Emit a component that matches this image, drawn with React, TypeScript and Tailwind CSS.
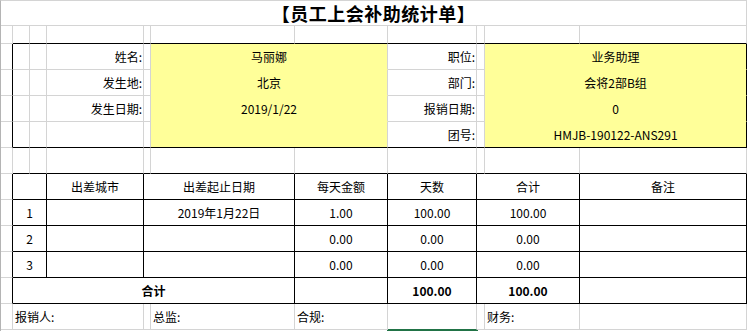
const R = {
  g: "border-r-[#d4d4d4]",
  k: "border-r-black",
  t: "border-r-transparent",
};

const B = {
  g: "border-b-[#d4d4d4]",
  k: "border-b-black",
  t: "border-b-transparent",
  gr: "border-b-[#217346]",
};

type CellProps = {
  w: string;
  r?: keyof typeof R;
  b?: keyof typeof B;
  bg?: string;
  align?: "left" | "center" | "right";
  bold?: boolean;
  children?: React.ReactNode;
};

function C({ w, r = "g", b = "g", bg = "bg-white", align = "center", bold, children }: CellProps) {
  const justify =
    align === "left" ? "justify-start pl-[2px]" : align === "right" ? "justify-end pr-[1px]" : "justify-center";
  return (
    <div
      className={`${w} ${R[r]} ${B[b]} ${bg} ${justify} ${bold ? "font-bold" : ""} flex h-full shrink-0 items-center whitespace-nowrap border-r border-b`}
    >
      {children}
    </div>
  );
}

function Row({ h, children }: { h: string; children: React.ReactNode }) {
  return <div className={`${h} flex`}>{children}</div>;
}

const info = [
  ["姓名:", "马丽娜", "职位:", "业务助理"],
  ["发生地:", "北京", "部门:", "会将2部B组"],
  ["发生日期:", "2019/1/22", "报销日期:", "0"],
  ["", "", "团号:", "HMJB-190122-ANS291"],
];

const items = [
  ["1", "", "2019年1月22日", "1.00", "100.00", "100.00", ""],
  ["2", "", "", "0.00", "0.00", "0.00", ""],
  ["3", "", "", "0.00", "0.00", "0.00", ""],
];

const Y = "bg-[#ffff99]";

export default function App() {
  return (
    <div className="w-[747px] border-t border-l border-t-[#d4d4d4] border-l-[#b4b4b4] bg-white font-['Noto_Sans_CJK_SC',sans-serif] text-[12px] leading-none text-black">
      <Row h="h-[25px]">
        <C w="w-[746px]">
          <span className="text-[18px] font-bold tracking-[0.5px]">【员工上会补助统计单】</span>
        </C>
      </Row>

      <Row h="h-[18px]">
        <C w="w-[12px]" />
        <C w="w-[17px]" b="k" />
        <C w="w-[17px]" b="k" />
        <C w="w-[97px]" b="k" />
        <C w="w-[7px]" b="k" />
        <C w="w-[144px]" b="k" />
        <C w="w-[93px]" b="k" />
        <C w="w-[89px]" b="k" />
        <C w="w-[8px]" b="k" />
        <C w="w-[95px]" b="k" />
        <C w="w-[167px]" b="k" />
      </Row>

      {info.map((row, i) => {
        const last = i === info.length - 1;
        return (
          <Row h="h-[26px]" key={i}>
            <C w="w-[12px]" r="k" />
            <C w="w-[17px]" b={last ? "k" : "g"} />
            <C w="w-[17px]" b={last ? "k" : "g"} />
            <C w="w-[97px]" b={last ? "k" : "g"} align="right">
              {row[0]}
            </C>
            <C w="w-[7px]" b={last ? "k" : "g"} />
            <C w="w-[237px]" b={last ? "k" : "t"} bg={Y}>
              {row[1]}
            </C>
            <C w="w-[89px]" b={last ? "k" : "g"} align="right">
              {row[2]}
            </C>
            <C w="w-[8px]" b={last ? "k" : "g"} />
            <C w="w-[262px]" r="k" b={last ? "k" : "t"} bg={Y}>
              {row[3]}
            </C>
          </Row>
        );
      })}

      <Row h="h-[26px]">
        <C w="w-[12px]" />
        <C w="w-[17px]" b="k" />
        <C w="w-[17px]" b="k" />
        <C w="w-[97px]" b="k" />
        <C w="w-[7px]" b="k" />
        <C w="w-[144px]" b="k" />
        <C w="w-[93px]" b="k" />
        <C w="w-[89px]" b="k" />
        <C w="w-[8px]" b="k" />
        <C w="w-[95px]" b="k" />
        <C w="w-[167px]" b="k" />
      </Row>

      <Row h="h-[26px]">
        <C w="w-[12px]" r="k" />
        <C w="w-[34px]" r="k" b="k" />
        <C w="w-[97px]" r="k" b="k">出差城市</C>
        <C w="w-[151px]" r="k" b="k">出差起止日期</C>
        <C w="w-[93px]" r="k" b="k">每天金额</C>
        <C w="w-[89px]" r="k" b="k">天数</C>
        <C w="w-[103px]" r="k" b="k">合计</C>
        <C w="w-[167px]" r="k" b="k">备注</C>
      </Row>

      {items.map((row) => (
        <Row h="h-[26px]" key={row[0]}>
          <C w="w-[12px]" r="k" />
          <C w="w-[34px]" r="k" b="k">{row[0]}</C>
          <C w="w-[97px]" r="k" b="k">{row[1]}</C>
          <C w="w-[151px]" r="k" b="k">{row[2]}</C>
          <C w="w-[93px]" r="k" b="k">{row[3]}</C>
          <C w="w-[89px]" r="k" b="k">{row[4]}</C>
          <C w="w-[103px]" r="k" b="k">{row[5]}</C>
          <C w="w-[167px]" r="k" b="k">{row[6]}</C>
        </Row>
      ))}

      <Row h="h-[26px]">
        <C w="w-[12px]" r="k" />
        <C w="w-[282px]" r="k" b="k" bold>合计</C>
        <C w="w-[93px]" r="k" b="k" />
        <C w="w-[89px]" r="k" b="k" bold>100.00</C>
        <C w="w-[103px]" r="k" b="k" bold>100.00</C>
        <C w="w-[167px]" r="k" b="k" />
      </Row>

      <Row h="h-[26px]">
        <C w="w-[12px]" />
        <C w="w-[131px]" align="left">报销人:</C>
        <C w="w-[7px]" />
        <C w="w-[144px]" align="left">总监:</C>
        <C w="w-[93px]" align="left">合规:</C>
        <C w="w-[89px]" b="gr" />
        <C w="w-[8px]" />
        <C w="w-[95px]" align="left">财务:</C>
        <C w="w-[167px]" />
      </Row>

      <div className="flex h-px">
        <div className="w-[386px]" />
        <div className="w-[91px] bg-[#217346]" />
      </div>
    </div>
  );
}
